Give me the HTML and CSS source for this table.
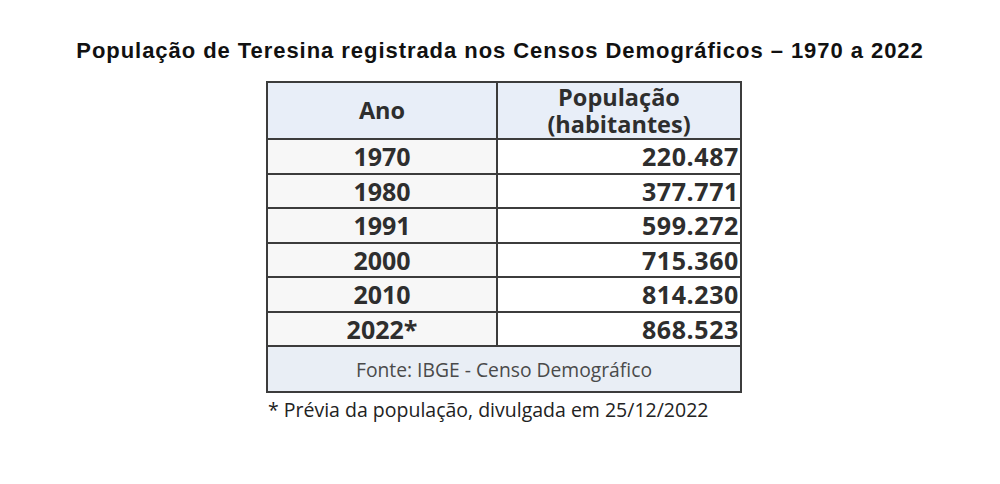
FILE: index.html
```html
<!DOCTYPE html>
<html lang="pt-BR">
<head>
<meta charset="utf-8">
<title>População de Teresina</title>
<link rel="stylesheet" href="styles.css">
</head>
<body>
<main class="page">
  <h1 class="title">População de Teresina registrada nos Censos Demográficos – 1970 a 2022</h1>
  <div class="block">
    <table class="census">
      <thead>
        <tr>
          <th class="col-year">Ano</th>
          <th class="col-pop"><span class="line">População</span><span class="line">(habitantes)</span></th>
        </tr>
      </thead>
      <tbody>
        <tr><td class="year">1970</td><td class="pop">220.487</td></tr>
        <tr><td class="year">1980</td><td class="pop">377.771</td></tr>
        <tr><td class="year">1991</td><td class="pop">599.272</td></tr>
        <tr><td class="year">2000</td><td class="pop">715.360</td></tr>
        <tr><td class="year">2010</td><td class="pop">814.230</td></tr>
        <tr><td class="year">2022*</td><td class="pop">868.523</td></tr>
      </tbody>
      <tfoot>
        <tr><td class="source" colspan="2">Fonte: IBGE - Censo Demográfico</td></tr>
      </tfoot>
    </table>
    <p class="note">* Prévia da população, divulgada em 25/12/2022</p>
  </div>
</main>
</body>
</html>
```

FILE: styles.css
```css
html, body {
  margin: 0;
  padding: 0;
  background: #ffffff;
}

.page {
  width: 1000px;
  height: 484px;
  display: flex;
  flex-direction: column;
  align-items: center;
  padding-top: 38px;
  box-sizing: border-box;
}

.title {
  margin: 0;
  font-family: "Liberation Sans", Arial, sans-serif;
  font-weight: bold;
  font-size: 22px;
  line-height: 26px;
  color: #111111;
  letter-spacing: 0.95px;
  white-space: nowrap;
}

.block {
  margin-top: 17px;
  margin-left: 8px;
  display: flex;
  flex-direction: column;
}

.census {
  border-collapse: collapse;
  border: 2px solid #3c3c3c;
  width: 476px;
  font-family: "Open Sans", "Noto Sans", sans-serif;
  color: #2e2e2e;
}

.census th,
.census td {
  border: 2px solid #3c3c3c;
  padding: 0;
}

.census thead th {
  background: #e8eef8;
  height: 55px;
  font-weight: bold;
  font-size: 23.5px;
  vertical-align: middle;
  text-align: center;
}

.line {
  display: block;
  line-height: 27px;
}

.col-year {
  width: 228px;
  line-height: 27px;
}

.census tbody td {
  height: 32.5px;
  font-weight: bold;
  font-size: 25px;
  line-height: 32px;
}

.year {
  background: #f7f7f7;
  text-align: center;
}

.pop {
  background: #ffffff;
  text-align: right;
  letter-spacing: 0.6px;
}

.census tbody td.pop {
  padding-right: 1px;
}

.source {
  background: #e9eef5;
  height: 44px;
  text-align: center;
  font-size: 19.3px;
  color: #4a4a4a;
}

.note {
  margin: 5px 0 0 2px;
  font-family: "Open Sans", "Noto Sans", sans-serif;
  font-size: 19.5px;
  line-height: 24px;
  color: #222222;
}
```
